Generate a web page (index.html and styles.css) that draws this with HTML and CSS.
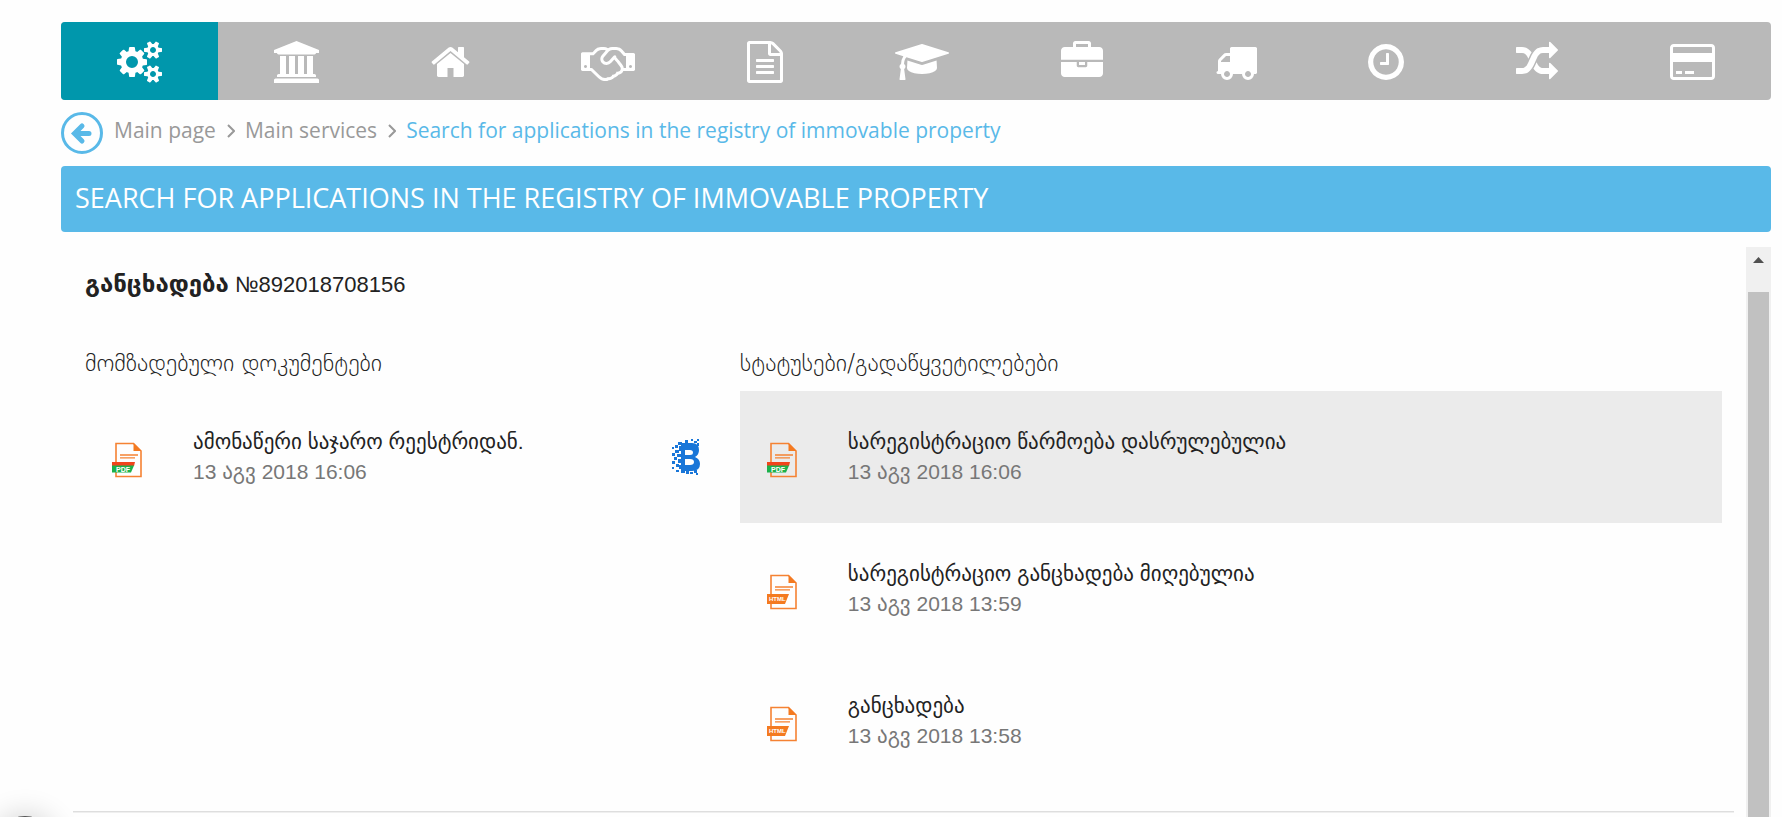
FILE: index.html
```html
<!DOCTYPE html>
<html lang="en">
<head>
<meta charset="utf-8">
<title>Search for applications in the registry of immovable property</title>
<link rel="stylesheet" href="styles.css">
</head>
<body>
<svg class="defs" aria-hidden="true">
  <defs>
    <symbol id="file-base" viewBox="0 0 32 36">
      <path d="M5 1.500h17.500l7.500 7.500v25.500H5z" fill="none" stroke="#f58233" stroke-width="1.600"/>
      <path d="M22.500 1l8 8h-8z" fill="#f47a20"/>
      <path d="M9 13h18M9 15.800h15" stroke="#f58233" stroke-width="1.300"/>
    </symbol>
  </defs>
</svg>
<div class="page">
  <nav class="tabs" aria-label="Services">
    <a class="tab tab-active" href="#" aria-label="Main services"><svg class="icon" viewBox="0 0 1920 1792"><path d="M896 896q0-106-75-181t-181-75-181 75-75 181 75 181 181 75 181-75 75-181zm768 512q0-52-38-90t-90-38-90 38-38 90q0 53 37.500 90.500t90.500 37.500 90.500-37.500 37.500-90.500zm0-1024q0-52-38-90t-90-38-90 38-38 90q0 53 37.500 90.500t90.500 37.500 90.500-37.500 37.500-90.500zm-384 421v185q0 10-7 19.500t-16 10.500l-155 24q-11 35-32 76 34 48 90 115 7 11 7 20 0 12-7 19-23 30-82.500 89.500t-78.500 59.500q-11 0-21-7l-115-90q-37 19-77 31-11 108-23 155-7 24-30 24h-186q-11 0-20-7.500t-10-17.500l-23-153q-34-10-75-31l-118 89q-7 7-20 7-11 0-21-8-144-133-144-160 0-9 7-19 10-14 41-53t47-61q-23-44-35-82l-152-24q-10-1-17-9.500t-7-19.500v-185q0-10 7-19.500t16-10.500l155-24q11-35 32-76-34-48-90-115-7-11-7-20 0-12 7-20 22-30 82-89t79-59q11 0 21 7l115 90q34-18 77-32 11-108 23-154 7-24 30-24h186q11 0 20 7.500t10 17.500l23 153q34 10 75 31l118-89q8-7 20-7 11 0 21 8 144 133 144 160 0 8-7 19-12 16-42 54t-45 60q23 48 34 82l152 23q10 2 17 10.500t7 19.500zm640 533v140q0 16-149 31-12 27-30 52 51 113 51 138 0 4-4 7-122 71-124 71-8 0-46-47t-52-68q-20 2-30 2t-30-2q-14 21-52 68t-46 47q-2 0-124-71-4-3-4-7 0-25 51-138-18-25-30-52-149-15-149-31v-140q0-16 149-31 13-29 30-52-51-113-51-138 0-4 4-7 4-2 35-20t59-34 30-16q8 0 46 46.500t52 67.500q20-2 30-2t30 2q51-71 92-112l6-2q4 0 124 70 4 3 4 7 0 25-51 138 17 23 30 52 149 15 149 31zm0-1024v140q0 16-149 31-12 27-30 52 51 113 51 138 0 4-4 7-122 71-124 71-8 0-46-47t-52-68q-20 2-30 2t-30-2q-14 21-52 68t-46 47q-2 0-124-71-4-3-4-7 0-25 51-138-18-25-30-52-149-15-149-31v-140q0-16 149-31 13-29 30-52-51-113-51-138 0-4 4-7 4-2 35-20t59-34 30-16q8 0 46 46.500t52 67.500q20-2 30-2t30 2q51-71 92-112l6-2q4 0 124 70 4 3 4 7 0 25-51 138 17 23 30 52 149 15 149 31z"/></svg></a>
    <a class="tab" href="#" aria-label="Government"><svg class="icon" viewBox="0 0 1920 1792"><path d="M960 0l960 384v128h-128q0 26-20.500 45t-48.500 19h-1526q-28 0-48.500-19t-20.500-45h-128v-128zm-704 640h256v768h128v-768h256v768h128v-768h256v768h128v-768h256v768h59q28 0 48.500 19t20.500 45v64h-1664v-64q0-26 20.500-45t48.500-19h59v-768zm1595 960q28 0 48.500 19t20.500 45v128h-1920v-128q0-26 20.500-45t48.500-19h1782z"/></svg></a>
    <a class="tab" href="#" aria-label="Property"><svg class="icon" viewBox="0 0 1664 1792"><path d="M1408 992v480q0 26-19 45t-45 19h-384v-384h-256v384h-384q-26 0-45-19t-19-45v-480q0-1 .5-3t.5-3l575-474 575 474q1 2 1 6zm223-69l-62 74q-8 9-21 11h-3q-13 0-21-7l-692-577-692 577q-12 8-24 7-13-2-21-11l-62-74q-8-10-7-23.500t11-21.500l719-599q32-26 76-26t76 26l244 204v-195q0-14 9-23t23-9h192q14 0 23 9t9 23v408l219 182q10 8 11 21.500t-7 23.500z"/></svg></a>
    <a class="tab" href="#" aria-label="Agreements"><svg class="icon" viewBox="0 0 2304 1792"><path d="M192 1152q40 0 56-32t0-64-56-32-56 32 0 64 56 32zM1665 1094q-10-13-38.500-50t-41.500-54-38-49-42.500-53-40.500-47-45-49l-125 140q-83 94-208.500 92t-205.500-98q-57-69-56.500-158t58.500-157l177-206q-22-11-51-16.500t-47.500-6-56.500.5-49 1q-92 0-158 66l-158 158h-155v544q5 0 21-.5t22 0 19.500 2 20.500 4.500 17.500 8.500 18.500 13.500l297 292q115 111 227 111 78 0 125-47 57 20 112.500-8t72.500-85q74 6 127-44 20-18 36-45.500t14-50.500q10 10 43 10 43 0 77-21t49.500-53 12-71.500-30.500-73.500zM1824 1152h96v-512h-93l-157-180q-66-76-169-76h-167q-89 0-146 67l-209 243q-28 33-28 75t27 75q43 51 110 52t111-49l193-218q25-23 53.500-21.500t47 27 8.500 56.500q16 19 56 63t60 68q29 36 82.500 105.500t64.500 84.500q52 66 60 140zM2112 1152q40 0 56-32t0-64-56-32-56 32 0 64 56 32zM2304 576v640q0 26-19 45t-45 19h-434q-27 65-82 106.500t-125 51.500q-33 48-80.500 81.500t-102.500 45.500q-42 53-104.500 81.500t-128.500 24.500q-60 34-126 39.500t-127.500-14-117-53.500-103.500-81l-287-282h-358q-26 0-45-19t-19-45v-672q0-26 19-45t45-19h421q14-14 47-48t47.500-48 44-40 50.500-37.500 51-25.500 62-19.500 68-5.500h117q99 0 181 56 82-56 181-56h167q35 0 67 6t56.500 14.500 51.500 26.500 44.500 31 43 39.500 39 42 41 48 41.500 48.500h355q26 0 45 19t19 45z"/></svg></a>
    <a class="tab" href="#" aria-label="Documents"><svg class="icon" viewBox="0 0 1536 1792"><path d="M1468 380q28 28 48 76t20 88v1152q0 40-28 68t-68 28h-1344q-40 0-68-28t-28-68v-1600q0-40 28-68t68-28h896q40 0 88 20t76 48zm-444-244v376h376q-10-29-22-41l-313-313q-12-12-41-22zm384 1528v-1024h-416q-40 0-68-28t-28-68v-416h-768v1536h1280zm-1024-864q0-14 9-23t23-9h704q14 0 23 9t9 23v64q0 14-9 23t-23 9h-704q-14 0-23-9t-9-23v-64zm736 224q14 0 23 9t9 23v64q0 14-9 23t-23 9h-704q-14 0-23-9t-9-23v-64q0-14 9-23t23-9h704zm0 256q14 0 23 9t9 23v64q0 14-9 23t-23 9h-704q-14 0-23-9t-9-23v-64q0-14 9-23t23-9h704z"/></svg></a>
    <a class="tab" href="#" aria-label="Education"><svg class="icon" viewBox="0 0 2304 1792"><path d="M1774 836l18 316q4 69-82 128t-235 93.500-323 34.500-323-34.500-235-93.500-82-128l18-316 574 181q22 7 48 7t48-7zm530-324q0 23-22 31l-1120 352q-4 1-10 1t-10-1l-652-206q-43 34-71 111.500t-34 178.500q63 36 63 109 0 69-58 107l58 433q2 14-8 25-9 11-24 11h-192q-15 0-24-11-10-11-8-25l58-433q-58-38-58-107 0-73 65-111 11-207 98-330l-333-104q-22-8-22-31t22-31l1120-352q4-1 10-1t10 1l1120 352q22 8 22 31z"/></svg></a>
    <a class="tab" href="#" aria-label="Business"><svg class="icon" viewBox="0 0 1792 1792"><path d="M640 256h512v-128h-512v128zm1152 640v480q0 66-47 113t-113 47h-1472q-66 0-113-47t-47-113v-480h672v160q0 26 19 45t45 19h320q26 0 45-19t19-45v-160h672zm-768 0v128h-256v-128h256zm768-480v384h-1792v-384q0-66 47-113t113-47h352v-160q0-40 28-68t68-28h576q40 0 68 28t28 68v160h352q66 0 113 47t47 113z"/></svg></a>
    <a class="tab" href="#" aria-label="Transport"><svg class="icon" viewBox="0 0 1792 1792"><path d="M640 1408q0-52-38-90t-90-38-90 38-38 90 38 90 90 38 90-38 38-90zm-384-512h384v-256h-158q-13 0-22 9l-195 195q-9 9-9 22v30zm1280 512q0-52-38-90t-90-38-90 38-38 90 38 90 90 38 90-38 38-90zm256-1088v1024q0 15-4 26.500t-13.500 18.500-16.500 11.500-23.500 6-22.500 2-25.500 0-22.500-.5q0 106-75 181t-181 75-181-75-75-181h-384q0 106-75 181t-181 75-181-75-75-181h-64q-3 0-22.500.5t-25.500 0-22.500-2-23.500-6-16.500-11.500-13.500-18.500-4-26.500q0-26 19-45t45-19v-320q0-8-.5-35t0-38 2.500-34.500 6.500-37 14-30.500 22.500-30l198-198q19-19 50.500-32t58.500-13h160v-192q0-26 19-45t45-19h1024q26 0 45 19t19 45z"/></svg></a>
    <a class="tab" href="#" aria-label="History"><svg class="icon" viewBox="128 0 1536 1792"><path d="M1024 544v448q0 14-9 23t-23 9h-320q-14 0-23-9t-9-23v-64q0-14 9-23t23-9h224v-352q0-14 9-23t23-9h64q14 0 23 9t9 23zm416 352q0-148-73-273t-198-198-273-73-273 73-198 198-73 273 73 273 198 198 273 73 273-73 198-198 73-273zm224 0q0 209-103 385.500t-279.500 279.500-385.500 103-385.500-103-279.500-279.500-103-385.500 103-385.500 279.500-279.500 385.500-103 385.500 103 279.500 279.500 103 385.500z"/></svg></a>
    <a class="tab" href="#" aria-label="Other services"><svg class="icon" viewBox="0 0 1792 1792"><path d="M666 481q-60 92-137 273-22-45-37-72.500t-40.500-63.500-51-56.500-63-35-81.500-14.500h-224q-14 0-23-9t-9-23v-192q0-14 9-23t23-9h224q250 0 410 225zm1126 799q0 14-9 23l-320 320q-9 9-23 9-13 0-22.500-9.500t-9.500-22.500v-192q-32 0-85 .5t-81 1-73-1-71-5-64-10.500-63-18.500-58-28.500-59-40-55-53.500-56-69.500q59-93 136-273 22 45 37 72.500t40.500 63.500 51 56.500 63 35 81.500 14.500h256v-192q0-14 9-23t23-9q12 0 24 10l319 319q9 9 9 23zm0-896q0 14-9 23l-320 320q-9 9-23 9-13 0-22.500-9.500t-9.500-22.500v-192h-256q-48 0-87 15t-69 45-51 61.500-45 77.500q-32 62-78 171-29 66-49.500 111t-54 105-64 100-74 83-90 68.500-106.500 42-128 16.500h-224q-14 0-23-9t-9-23v-192q0-14 9-23t23-9h224q48 0 87-15t69-45 51-61.500 45-77.500q32-62 78-171 29-66 49.500-111t54-105 64-100 74-83 90-68.500 106.500-42 128-16.500h256v-192q0-14 9-23t23-9q12 0 24 10l319 319q9 9 9 23z"/></svg></a>
    <a class="tab" href="#" aria-label="Payments"><svg class="icon" viewBox="0 0 1920 1792"><path d="M1760 128q66 0 113 47t47 113v1216q0 66-47 113t-113 47h-1600q-66 0-113-47t-47-113v-1216q0-66 47-113t113-47h1600zm-1600 128q-13 0-22.500 9.500t-9.500 22.500v224h1664v-224q0-13-9.500-22.500t-22.500-9.500h-1600zm1600 1280q13 0 22.500-9.500t9.500-22.500v-608h-1664v608q0 13 9.500 22.500t22.500 9.500h1600zm-1504-128v-128h256v128h-256zm384 0v-128h384v128h-384z"/></svg></a>
  </nav>

  <nav class="crumbs" aria-label="Breadcrumb">
    <a class="back" href="#" aria-label="Back"><svg class="back-icon" viewBox="0 0 42 42"><circle cx="21" cy="21" r="19.500"/><path d="M28 21.500H14M21 14l-7.500 7.500 7.500 7.500"/></svg></a>
    <a class="crumb" href="#">Main page</a>
    <svg class="chevron" viewBox="0 0 8 14"><path d="M1 1l6 6-6 6"/></svg>
    <a class="crumb" href="#">Main services</a>
    <svg class="chevron" viewBox="0 0 8 14"><path d="M1 1l6 6-6 6"/></svg>
    <a class="crumb crumb-current" href="#">Search for applications in the registry of immovable property</a>
  </nav>

  <h1 class="banner">SEARCH FOR APPLICATIONS IN THE REGISTRY OF IMMOVABLE PROPERTY</h1>

  <div class="panel">
    <main class="content">
      <h2 class="app-title" lang="ka"><b class="app-kind">განცხადება</b> №892018708156</h2>
      <div class="columns">
        <section class="documents" lang="ka">
          <h3 class="section-title">მომზადებული დოკუმენტები</h3>
          <a class="row" href="#">
            <svg class="file" viewBox="0 0 32 36"><use href="#file-base"/><path d="M1 20h23l-1 4H1z" fill="#f0441c"/><path d="M1 23.500h22l-3 7H1z" fill="#1bb14b"/><text class="file-label" x="5" y="29.500">PDF</text></svg>
            <span class="row-text"><span class="row-name">ამონაწერი საჯარო რეესტრიდან.</span><span class="row-date">13 აგვ 2018 16:06</span></span>
            <svg class="chain" viewBox="0 0 28 36"><path fill-rule="evenodd" d="M9 4h11q7 0 7 7 0 5-4 7 5 2 5 7 0 7-8 7H9zM13 11v5h5q3 0 3-2.500t-3-2.500zM13 20v6h5q4 0 4-3t-4-3z"/><path d="M13 1h3v3h-3zM19 0h2v2h-2zM22 2h3v2h-3zM25 0h2v2h-2zM25 4h2v3h-2zM6 3h4v3H6zM3 6h3v3H3zM7 7h3v5H7zM0 8h2v2H0zM3 11h4v3H3zM0 14h3v3H0zM5 15h5v3H5zM2 18h3v3H2zM6 20h4v4H6zM0 22h3v3H0zM4 25h3v3H4zM0 28h2v2H0zM7 26h3v4H7zM4 31h3v2H4zM9 32h4v2H9zM14 32h3v3h-3zM18 33h3v2h-3zM22 31h3v3h-3zM24 34h2v2h-2z"/></svg>
          </a>
        </section>
        <section class="statuses" lang="ka">
          <h3 class="section-title">სტატუსები/გადაწყვეტილებები</h3>
          <a class="row row-selected" href="#">
            <svg class="file" viewBox="0 0 32 36"><use href="#file-base"/><path d="M1 20h23l-1 4H1z" fill="#f0441c"/><path d="M1 23.500h22l-3 7H1z" fill="#1bb14b"/><text class="file-label" x="5" y="29.500">PDF</text></svg>
            <span class="row-text"><span class="row-name">სარეგისტრაციო წარმოება დასრულებულია</span><span class="row-date">13 აგვ 2018 16:06</span></span>
          </a>
          <a class="row" href="#">
            <svg class="file" viewBox="0 0 32 36"><use href="#file-base"/><path d="M1 20h22l-4 10H1z" fill="#f47a20"/><text class="file-label file-label-small" x="3" y="27">HTML</text></svg>
            <span class="row-text"><span class="row-name">სარეგისტრაციო განცხადება მიღებულია</span><span class="row-date">13 აგვ 2018 13:59</span></span>
          </a>
          <a class="row" href="#">
            <svg class="file" viewBox="0 0 32 36"><use href="#file-base"/><path d="M1 20h22l-4 10H1z" fill="#f47a20"/><text class="file-label file-label-small" x="3" y="27">HTML</text></svg>
            <span class="row-text"><span class="row-name">განცხადება</span><span class="row-date">13 აგვ 2018 13:58</span></span>
          </a>
        </section>
      </div>
      <hr class="rule">
    </main>
    <div class="scrollbar" aria-hidden="true">
      <svg class="scroll-arrow" viewBox="0 0 11 6"><path d="M5.500 0L11 6H0z"/></svg>
      <div class="scroll-thumb"></div>
    </div>
  </div>
</div>
<div class="floating" aria-hidden="true"></div>
</body>
</html>
```

FILE: styles.css
```css
* {
  box-sizing: border-box;
}

body {
  margin: 0;
  background: #fefefe;
  font-family: "Open Sans", "Liberation Sans", sans-serif;
  color: #222;
}

a {
  color: inherit;
  text-decoration: none;
}

h1, h2, h3 {
  margin: 0;
  font-weight: 400;
}

.defs {
  position: absolute;
  width: 0;
  height: 0;
}

.page {
  display: flex;
  flex-direction: column;
  height: 100vh;
  padding: 22px 11px 0 61px;
  overflow: hidden;
}

.tabs {
  display: flex;
  flex: none;
  height: 78px;
  border-radius: 4px;
  overflow: hidden;
  background: #b9b9b9;
}

.tab {
  display: flex;
  flex: 1 1 auto;
  align-items: center;
  justify-content: center;
  padding-top: 2px;
}

.tab-active {
  background: #0097ac;
}

.icon {
  height: 42px;
  fill: #fff;
}

.crumbs {
  display: flex;
  flex: none;
  align-items: center;
  height: 66px;
  font-size: 21px;
  line-height: 28px;
  color: #999;
}

.crumb {
  padding-bottom: 6px;
}

.crumb-current {
  color: #59b9e8;
}

.back {
  display: flex;
  margin-right: 11px;
}

.back-icon {
  width: 42px;
  height: 42px;
  fill: none;
  stroke: #59b9e8;
  stroke-width: 3px;
}

.back-icon path {
  stroke-width: 5px;
  stroke-linecap: round;
}

.chevron {
  width: 8px;
  height: 14px;
  margin: 0 10px 4px 11px;
  fill: none;
  stroke: #999;
  stroke-width: 2px;
}

.banner {
  flex: none;
  padding: 0 14px 2px;
  border-radius: 4px;
  background: #59b9e8;
  color: #fff;
  font-size: 27px;
  line-height: 64px;
}

.panel {
  display: flex;
  flex: 1;
  min-height: 0;
  margin-top: 15px;
}

.content {
  flex: 1;
  padding: 0 12px;
  font-family: "Liberation Sans", "DejaVu Sans", sans-serif;
}

.app-title {
  height: 56px;
  padding: 19px 12px 0;
  font-size: 22px;
  line-height: 36px;
}

.app-kind {
  font-size: 24px;
}

.columns {
  display: flex;
  padding: 42px 12px 24px;
}

.documents {
  flex: 2;
}

.statuses {
  flex: 3;
}

.section-title {
  padding-bottom: 10px;
  font-family: "DejaVu Sans", sans-serif;
  font-size: 24px;
  font-weight: 200;
  line-height: 36px;
}

.row {
  display: flex;
  align-items: center;
  height: 132px;
  padding: 0 40px 0 26px;
}

.row-selected {
  background: #ebebeb;
}

.file {
  flex: none;
  width: 32px;
  height: 36px;
  margin: 6px 50px 0 0;
}

.file-label {
  fill: #fff;
  font-family: "Liberation Sans", sans-serif;
  font-size: 7px;
  font-weight: 700;
}

.file-label-small {
  font-size: 6px;
}

.row-text {
  display: flex;
  flex: 1;
  flex-direction: column;
}

.row-name {
  font-size: 21px;
  line-height: 30px;
}

.row-date {
  color: #777;
  font-size: 21px;
  line-height: 30px;
}

.chain {
  flex: none;
  width: 28px;
  height: 36px;
  fill: #1976d8;
}

.rule {
  height: 2px;
  margin: 0;
  border: 0;
  background: #dedede;
  border-bottom: 1px solid #efefef;
}

.scrollbar {
  display: flex;
  flex: none;
  flex-direction: column;
  align-items: center;
  width: 25px;
  padding-top: 10px;
  background: #f0f0f0;
}

.scroll-arrow {
  width: 11px;
  height: 6px;
  fill: #505050;
}

.scroll-thumb {
  flex: 1;
  width: 21px;
  margin-top: 29px;
  background: #c1c1c1;
}

.floating {
  position: fixed;
  bottom: -59px;
  left: -5px;
  width: 60px;
  height: 60px;
  border-radius: 50%;
  background: #555;
  box-shadow: 0 0 30px rgba(0, 0, 0, 0.2);
}
```
